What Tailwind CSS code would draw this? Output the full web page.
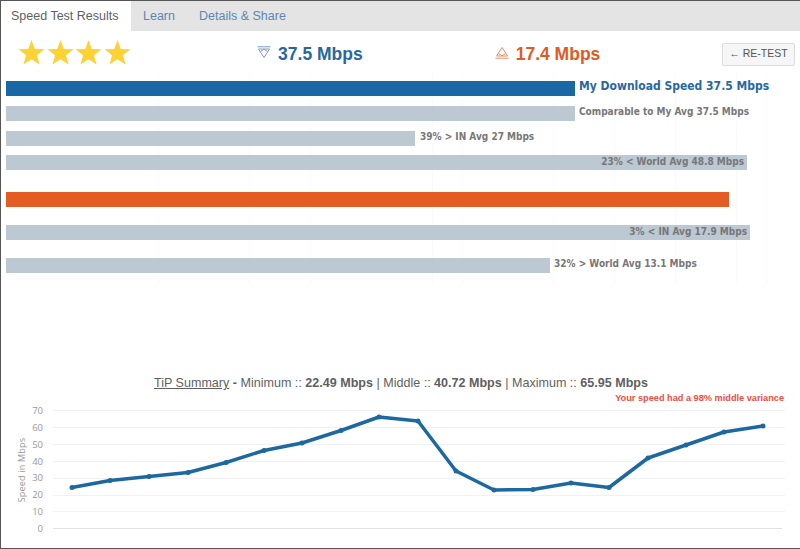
<!DOCTYPE html>
<html lang="en">
  <head>
    <meta charset="UTF-8" />
    <script src="https://cdn.jsdelivr.net/npm/@tailwindcss/browser@4"></script>
    <title>Speed Test Results</title>
  </head>
  <body class="bg-white">
    <div class="w-[800px] h-[549px] overflow-hidden border-t border-l border-b border-[#555] font-['Liberation_Sans',Arial,sans-serif] text-[#5f5f5f]">
      <!-- tabs -->
      <div class="flex h-[30px] bg-[#e4e4e4] text-[12.5px] leading-[30px]">
        <div class="w-[130px] bg-white pl-[10px]">Speed Test Results</div>
        <div class="ml-[12px] text-[#5b87b5]">Learn</div>
        <div class="ml-[24px] text-[#5b87b5]">Details &amp; Share</div>
      </div>

      <!-- summary row -->
      <div class="relative h-[42px] flex items-center">
        <div class="flex ml-[17px] mt-[1px] gap-[1.7px]">
          <svg class="w-[27px] h-[25px]" viewBox="0 0 28 26"><polygon fill="#fdd235" points="14,0 17.4,9.4 27.5,9.7 19.6,15.9 22.4,25.6 14,19.9 5.6,25.6 8.4,15.9 0.5,9.7 10.6,9.4" /></svg>
          <svg class="w-[27px] h-[25px]" viewBox="0 0 28 26"><polygon fill="#fdd235" points="14,0 17.4,9.4 27.5,9.7 19.6,15.9 22.4,25.6 14,19.9 5.6,25.6 8.4,15.9 0.5,9.7 10.6,9.4" /></svg>
          <svg class="w-[27px] h-[25px]" viewBox="0 0 28 26"><polygon fill="#fdd235" points="14,0 17.4,9.4 27.5,9.7 19.6,15.9 22.4,25.6 14,19.9 5.6,25.6 8.4,15.9 0.5,9.7 10.6,9.4" /></svg>
          <svg class="w-[27px] h-[25px]" viewBox="0 0 28 26"><polygon fill="#fdd235" points="14,0 17.4,9.4 27.5,9.7 19.6,15.9 22.4,25.6 14,19.9 5.6,25.6 8.4,15.9 0.5,9.7 10.6,9.4" /></svg>
        </div>
        <svg class="ml-[126px] w-[14px] h-[13px]" viewBox="0 0 14 13" fill="none" stroke="#7a9fc2" stroke-width="1"><path d="M0.5 0.8H13.5" /><path d="M1.5 3L7 11.5L12.5 3Z" /><path d="M3.5 5.5L7 3.2L10.5 5.5" /></svg>
        <div class="ml-[7px] mt-[4px] text-[17.5px] font-bold text-[#28679c]">37.5 Mbps</div>
        <svg class="ml-[132px] w-[14px] h-[13px]" viewBox="0 0 14 13" fill="none" stroke="#ec8d68" stroke-width="1"><path d="M0.5 12.2H13.5" /><path d="M1.5 10L7 1.5L12.5 10Z" /><path d="M3.5 7.5L7 9.8L10.5 7.5" /></svg>
        <div class="ml-[7px] mt-[4px] text-[17.5px] font-bold text-[#e05a26]">17.4 Mbps</div>
        <button class="ml-auto mr-[5px] mt-[4px] w-[73px] h-[23px] bg-[#f6f6f6] border border-[#ddd] rounded-[2px] text-[10.5px] text-[#555]">← RE-TEST</button>
      </div>

      <!-- bars -->
      <div class="relative h-[216px] pl-[5px] pt-[8px] font-['DejaVu_Sans_Condensed','DejaVu_Sans',Verdana,sans-serif] text-[10px] font-bold">
        <div class="absolute inset-0">
          <div class="absolute left-[157px] top-0 bottom-[4px] w-px bg-[#fafafa]"></div>
          <div class="absolute left-[248px] top-0 bottom-[4px] w-px bg-[#fafafa]"></div>
          <div class="absolute left-[309px] top-0 bottom-[4px] w-px bg-[#fafafa]"></div>
          <div class="absolute left-[431px] top-0 bottom-[4px] w-px bg-[#fafafa]"></div>
          <div class="absolute left-[461px] top-0 bottom-[4px] w-px bg-[#fafafa]"></div>
          <div class="absolute left-[552px] top-0 bottom-[4px] w-px bg-[#fafafa]"></div>
          <div class="absolute left-[613px] top-0 bottom-[4px] w-px bg-[#fafafa]"></div>
          <div class="absolute left-[674px] top-0 bottom-[4px] w-px bg-[#fafafa]"></div>
          <div class="absolute left-[735px] top-0 bottom-[4px] w-px bg-[#fafafa]"></div>
          <div class="absolute left-[765px] top-0 bottom-[4px] w-px bg-[#fafafa]"></div>
        </div>
        <div class="relative flex flex-col">
          <div class="flex items-start h-[15px]">
            <div class="w-[569px] h-[15px] bg-[#1a67a5]"></div>
            <span class="ml-[4px] -mt-[1px] text-[12px] leading-[13px] text-[#28689f]">My Download Speed 37.5 Mbps</span>
          </div>
          <div class="flex items-start h-[15px] mt-[10px]">
            <div class="w-[569px] h-[15px] bg-[#bcc8d2]"></div>
            <span class="ml-[4px] -mt-[1px] leading-[13px] text-[#777]">Comparable to My Avg 37.5 Mbps</span>
          </div>
          <div class="flex items-start h-[15px] mt-[10px]">
            <div class="w-[409px] h-[15px] bg-[#bcc8d2]"></div>
            <span class="ml-[5px] -mt-[1px] leading-[13px] text-[#777]">39% &gt; IN Avg 27 Mbps</span>
          </div>
          <div class="flex items-start justify-end w-[741px] h-[15px] mt-[9px] pr-[3px] bg-[#bcc8d2] text-[#777] leading-[13px]">
            <span>23% &lt; World Avg 48.8 Mbps</span>
          </div>
          <div class="w-[723px] h-[15px] mt-[22px] bg-[#e35c23]"></div>
          <div class="flex items-start justify-end w-[744px] h-[15px] mt-[18px] pr-[3px] bg-[#bcc8d2] text-[#777] leading-[13px]">
            <span>3% &lt; IN Avg 17.9 Mbps</span>
          </div>
          <div class="flex items-start h-[15px] mt-[18px]">
            <div class="w-[544px] h-[15px] bg-[#bcc8d2]"></div>
            <span class="ml-[4px] -mt-[1px] leading-[13px] text-[#777]">32% &gt; World Avg 13.1 Mbps</span>
          </div>
        </div>
      </div>

      <!-- tip summary -->
      <div class="mt-[86px] pl-[153px] text-[12.55px] leading-[16px] whitespace-nowrap"><span class="underline">TiP Summary</span> <b>-</b> Minimum :: <b>22.49 Mbps</b> | Middle :: <b>40.72 Mbps</b> | Maximum :: <b>65.95 Mbps</b></div>
      <div class="mt-[1px] pr-[16px] text-right text-[9.2px] leading-[12px] font-bold text-[#e8503f]">Your speed had a 98% middle variance</div>

      <!-- chart -->
      <svg class="block -ml-px mt-[1px]" width="800" height="144" viewBox="0 405 800 144" font-family="'Open Sans', sans-serif" font-size="9.5" fill="#999">
        <g stroke="#f1f1f1" stroke-width="1">
          <path d="M53 410.5H785" />
          <path d="M53 427.5H785" />
          <path d="M53 444.5H785" />
          <path d="M53 461.5H785" />
          <path d="M53 478.5H785" />
          <path d="M53 495.5H785" />
          <path d="M53 511.5H785" />
        </g>
        <path d="M53 528.5H782" stroke="#e2e2e2" />
        <g text-anchor="end">
          <text x="43" y="414">70</text>
          <text x="43" y="431">60</text>
          <text x="43" y="448">50</text>
          <text x="43" y="465">40</text>
          <text x="43" y="481">30</text>
          <text x="43" y="498">20</text>
          <text x="43" y="515">10</text>
          <text x="43" y="532">0</text>
        </g>
        <text transform="translate(25 470) rotate(-90)" text-anchor="middle" font-size="9" letter-spacing="0.2">Speed in Mbps</text>
        <polyline fill="none" stroke="#1d699f" stroke-width="3.5" stroke-linejoin="round" points="72,487.5 110,480.5 149,476.5 188,472.5 226,462.5 264,450.5 302,443 341,430.5 379,417 418,421 456,471 494,490 533,489.5 571,483 609,487.5 648,458 686,445 724,432 763,426" />
        <g fill="#1d699f">
          <circle cx="72" cy="487.5" r="2.5" />
          <circle cx="110" cy="480.5" r="2.5" />
          <circle cx="149" cy="476.5" r="2.5" />
          <circle cx="188" cy="472.5" r="2.5" />
          <circle cx="226" cy="462.5" r="2.5" />
          <circle cx="264" cy="450.5" r="2.5" />
          <circle cx="302" cy="443" r="2.5" />
          <circle cx="341" cy="430.5" r="2.5" />
          <circle cx="379" cy="417" r="2.5" />
          <circle cx="418" cy="421" r="2.5" />
          <circle cx="456" cy="471" r="2.5" />
          <circle cx="494" cy="490" r="2.5" />
          <circle cx="533" cy="489.5" r="2.5" />
          <circle cx="571" cy="483" r="2.5" />
          <circle cx="609" cy="487.5" r="2.5" />
          <circle cx="648" cy="458" r="2.5" />
          <circle cx="686" cy="445" r="2.5" />
          <circle cx="724" cy="432" r="2.5" />
          <circle cx="763" cy="426" r="2.5" />
        </g>
      </svg>
    </div>
  </body>
</html>
